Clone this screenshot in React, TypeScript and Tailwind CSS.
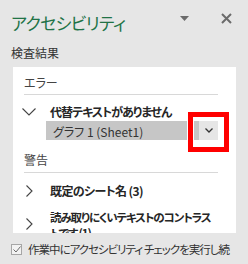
import React from 'react';

const jp = "font-['Noto_Sans_CJK_JP',sans-serif] [font-feature-settings:'palt']";

function ChevronDown() {
  return (
    <svg width="14" height="8" viewBox="0 0 14 8" className="block">
      <path d="M0.5 0.5 L7 7 L13.5 0.5" fill="none" stroke="#444" strokeWidth="1.1" />
    </svg>
  );
}

function ChevronRight() {
  return (
    <svg width="7" height="12" viewBox="0 0 7 12" className="block">
      <path d="M0.5 0.5 L6 6 L0.5 11.5" fill="none" stroke="#444" strokeWidth="1.1" />
    </svg>
  );
}

export default function App() {
  return (
    <div className={`relative w-[248px] h-[264px] overflow-hidden bg-[#e6e6e6] pt-[12px] ${jp}`}>
      {/* header */}
      <div className="flex items-start pl-[11px] pr-[16px]">
        <div className="text-[17px] leading-[22px] tracking-[-0.6px] text-[#217346]">アクセシビリティ</div>
        <svg width="9" height="5" viewBox="0 0 9 5" className="ml-auto mt-[4px] block shrink-0">
          <path d="M0 0 H9 L4.5 5 Z" fill="#6b6b6b" />
        </svg>
        <svg width="11" height="11" viewBox="0 0 11 11" className="ml-[32px] mt-[1px] block shrink-0">
          <path d="M1 1 L10 10 M10 1 L1 10" stroke="#6b6b6b" strokeWidth="2" />
        </svg>
      </div>

      <div className="mt-[11px] pl-[11px] text-[12px] leading-[16px] text-[#333]">検査結果</div>

      {/* results panel */}
      <div className="ml-[13px] mt-[6px] w-[223px] h-[166px] overflow-hidden bg-white pl-[11px] pr-[18px] pt-[8px]">
        <div className="border-b border-[#d8d8d8] pb-[3px] text-[12px] leading-[16px] text-[#444]">エラー</div>

        <div className="mt-[9px] -ml-[2px] flex items-center">
          <div className="w-[28px] shrink-0">
            <ChevronDown />
          </div>
          <div className="text-[12px] leading-[16px] font-bold tracking-[-1px] text-[#262626] whitespace-nowrap">
            代替テキストがありません
          </div>
        </div>

        <div className="mt-[1px] ml-[22px] flex h-[19px]">
          <div className="w-[141px] shrink-0 bg-[#c6c6c6] pl-[7px] pt-[2px] text-[12px] leading-[17px] text-[#333] whitespace-nowrap">
            グラフ 1 (Sheet1)
          </div>
          <div className="ml-[7px] w-[5px] shrink-0 bg-[#c6c6c6]" />
          <div className="flex w-[19px] shrink-0 items-center justify-center bg-[#e6e6e6]">
            <svg width="8" height="5" viewBox="0 0 8 5" className="block">
              <path d="M0.5 0.5 L4 4 L7.5 0.5" fill="none" stroke="#333" strokeWidth="1.3" />
            </svg>
          </div>
        </div>

        <div className="mt-[12px] border-b border-[#d8d8d8] pb-[4px] text-[12px] leading-[16px] text-[#444]">警告</div>

        <div className="mt-[10px] -ml-[2px] flex items-center">
          <div className="w-[28px] shrink-0 pl-[4px]">
            <ChevronRight />
          </div>
          <div className="text-[12px] leading-[16px] font-bold tracking-[-0.6px] text-[#262626] whitespace-nowrap">
            既定のシート名 (3)
          </div>
        </div>

        <div className="mt-[10px] -ml-[2px] flex items-start">
          <div className="w-[28px] shrink-0 pl-[4px] pt-[9px]">
            <ChevronRight />
          </div>
          <div className="text-[11.5px] leading-[16px] font-bold tracking-[-1.1px] text-[#262626] whitespace-nowrap">
            読み取りにくいテキストのコントラス
            <br />
            トです (1)
          </div>
        </div>
      </div>

      {/* footer checkbox */}
      <div className="mt-[8px] flex items-center pl-[11px]">
        <div className="flex h-[11px] w-[11px] shrink-0 items-center justify-center border border-[#a6a6a6] bg-[#f2f2f2]">
          <svg width="8" height="7" viewBox="0 0 8 7" className="block">
            <path d="M0.5 3.5 L3 6 L7.5 0.5" fill="none" stroke="#6b6b6b" strokeWidth="1" />
          </svg>
        </div>
        <div className="ml-[6px] whitespace-nowrap text-[11.5px] leading-[16px] tracking-[-1px] text-[#333]">
          作業中にアクセシビリティ&nbsp;チェックを実行し続
        </div>
      </div>

      {/* red highlight annotation */}
      <div className="absolute left-[188px] top-[112px] h-[40px] w-[41px] border-[5px] border-[#ff0000]" />
    </div>
  );
}
